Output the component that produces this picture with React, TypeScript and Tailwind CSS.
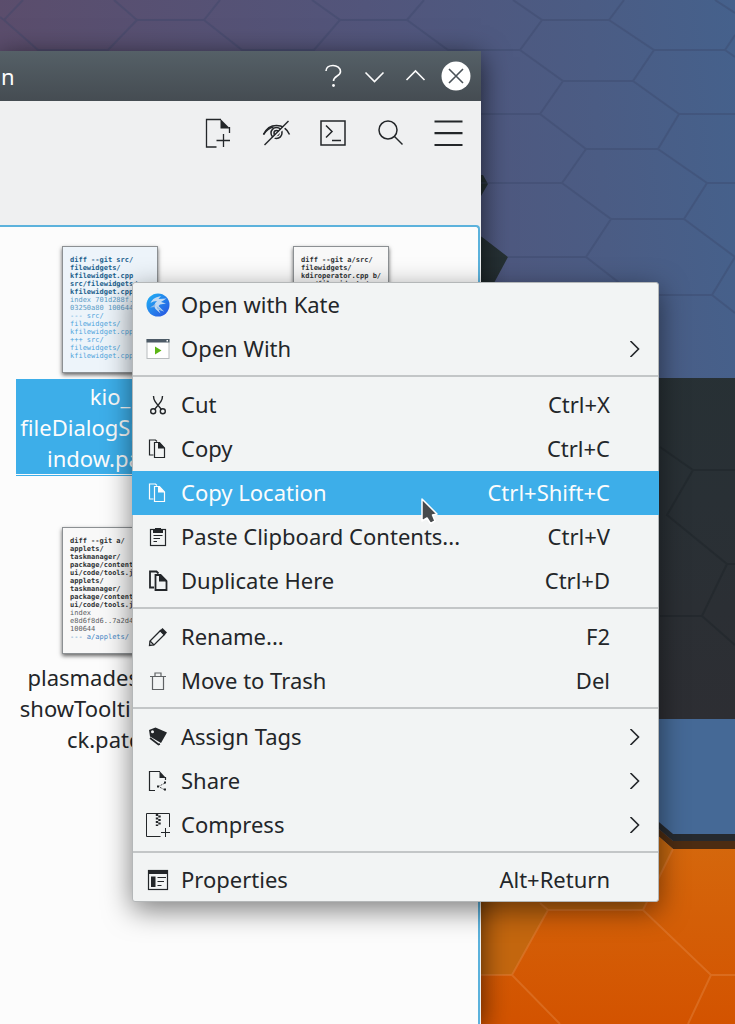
import type { ReactNode } from 'react';

type MenuEntry = {
  label: string;
  icon: ReactNode;
  shortcut?: string;
  submenu?: boolean;
  active?: boolean;
};

type FileEntry = {
  name: string[];
  bold: string[];
  plain: string[];
  diff: string[];
  selected?: boolean;
};

function Icon({ children, size = 24, width = 1.2 }: { children: ReactNode; size?: number; width?: number }) {
  return (
    <svg
      width={size}
      height={size}
      viewBox={`0 0 ${size} ${size}`}
      fill="none"
      stroke="currentColor"
      strokeWidth={width}
      className="shrink-0"
      aria-hidden="true"
    >
      {children}
    </svg>
  );
}

const KateIcon = () => (
  <Icon>
    <defs>
      <linearGradient id="kate" x1="0" y1="0" x2="1" y2="1">
        <stop offset="0" stopColor="#1fb4f6" />
        <stop offset="1" stopColor="#2a50e0" />
      </linearGradient>
    </defs>
    <circle cx="12" cy="12" r="11.5" fill="url(#kate)" stroke="none" />
    <path
      d="M4.500 10C6.500 5.500 10 4 15 3L12.500 6L20.500 5.500L15 9L20 10.500L14 11.500L12.500 13L18 18.500L12.500 16.500L14.500 20.500L9.500 16C7.500 13.500 8 10.500 11 8C8.500 8 6.500 8.800 4.500 10Z"
      fill="#c3daf3"
      stroke="none"
    />
    <path d="M9.500 11L4 14.500L9 14ZM10.500 13L18 18.500L11.500 16Z" fill="#8fb9e6" stroke="none" />
  </Icon>
);

const OpenWithIcon = () => (
  <Icon>
    <rect x="1" y="2.5" width="22" height="19" fill="#fff" stroke="#b8bcbe" strokeWidth="1" />
    <rect x="0.5" y="2" width="23" height="3.500" fill="#4d5a66" stroke="none" />
    <rect x="20.500" y="3" width="1.500" height="1.500" fill="#fff" stroke="none" />
    <path d="M9 9.500L15.500 13.500L9 17.500Z" fill="#5cb615" stroke="none" />
  </Icon>
);

const CutIcon = () => (
  <Icon width={1.4}>
    <circle cx="7.200" cy="18.200" r="2.500" />
    <circle cx="16.800" cy="18.200" r="2.500" />
    <path d="M7.500 3C7.500 7 9 9 15.300 16.200M16.500 3C16.500 7 15 9 8.700 16.200" />
  </Icon>
);

const CopyIcon = () => (
  <Icon>
    <path d="M7.500 18H3.500V3H9.500L11 4.500" />
    <path d="M8.500 5.500H13.500L18.500 11V20.500H8.500Z" />
    <path d="M12 5.500H13.500L19 11.500H12Z" fill="currentColor" stroke="none" />
  </Icon>
);

const DuplicateIcon = () => (
  <Icon width={1.8}>
    <path d="M8 18.500H4V2.500H10.500L12.500 4.500" />
    <path d="M9.500 6H14.500L20.500 12V21H9.500Z" />
    <path d="M13 5.500H15L21 11.500V12.500H13Z" fill="currentColor" stroke="none" />
  </Icon>
);

const PasteIcon = () => (
  <Icon>
    <rect x="4.500" y="4.500" width="15" height="16" />
    <path d="M7 4.500H9V3H15V4.500H17V8H7Z" fill="currentColor" stroke="none" />
    <path d="M7.500 10.500H16.500M7.500 13.500H14M7.500 16.500H11" />
  </Icon>
);

const RenameIcon = () => (
  <Icon width={1.3}>
    <path d="M3.500 20.500L4 16L14.500 5.500L18.500 9.500L8 20Z" />
    <path d="M4 16L8 20" />
    <path d="M13.500 6L16.500 3L21 7.500L18 10.500Z" fill="currentColor" stroke="none" />
  </Icon>
);

const TrashIcon = () => (
  <Icon>
    <path d="M4 7.500H20M6.500 7.500V20.500H17.500V7.500M9 7V4H15V7" stroke="#5f6264" />
  </Icon>
);

const TagIcon = () => (
  <Icon>
    <path
      fillRule="evenodd"
      d="M3 5L9.500 2.500L21 7.500L15 18L4 11.500ZM6.500 5.200A1.500 1.500 0 1 0 6.500 8.200A1.500 1.500 0 1 0 6.500 5.200Z"
      fill="currentColor"
      stroke="none"
    />
    <path d="M4 13L12.500 19.500L14 19" strokeWidth="1.600" />
  </Icon>
);

const ShareIcon = () => (
  <Icon>
    <path d="M9 21.500H3.500V2.500H14M19.500 8V11" />
    <path d="M13.500 2L20 9H13.500Z" fill="currentColor" stroke="none" />
    <path d="M19 14L12.500 17.500L19 21" strokeWidth="0.800" strokeDasharray="2 1" />
    <path d="M18 12.500H20V14.500H18ZM11 16.500H13V18.500H11ZM18 19.500H20V21.500H18Z" fill="currentColor" stroke="none" />
  </Icon>
);

const CompressIcon = () => (
  <Icon width={1}>
    <path d="M14.500 23.500H0.500V0.500H23.500V14" />
    <path d="M11 1V13M13.500 2.500V13" strokeWidth="2.400" strokeDasharray="2 1.500" />
    <path d="M15 19.500H24M19.500 15V24" />
  </Icon>
);

const PropertiesIcon = () => (
  <Icon>
    <rect x="2.500" y="2.500" width="19" height="19" />
    <path d="M2 2H22V6H2ZM5 8.500H9.500V19H5Z" fill="currentColor" stroke="none" />
    <path d="M11.500 9.500H20M11.500 13.500H18M11.500 17.500H15.500" strokeWidth="1" />
  </Icon>
);

const menuGroups: MenuEntry[][] = [
  [
    { label: 'Open with Kate', icon: <KateIcon /> },
    { label: 'Open With', icon: <OpenWithIcon />, submenu: true },
  ],
  [
    { label: 'Cut', icon: <CutIcon />, shortcut: 'Ctrl+X' },
    { label: 'Copy', icon: <CopyIcon />, shortcut: 'Ctrl+C' },
    { label: 'Copy Location', icon: <CopyIcon />, shortcut: 'Ctrl+Shift+C', active: true },
    { label: 'Paste Clipboard Contents...', icon: <PasteIcon />, shortcut: 'Ctrl+V' },
    { label: 'Duplicate Here', icon: <DuplicateIcon />, shortcut: 'Ctrl+D' },
  ],
  [
    { label: 'Rename...', icon: <RenameIcon />, shortcut: 'F2' },
    { label: 'Move to Trash', icon: <TrashIcon />, shortcut: 'Del' },
  ],
  [
    { label: 'Assign Tags', icon: <TagIcon />, submenu: true },
    { label: 'Share', icon: <ShareIcon />, submenu: true },
    { label: 'Compress', icon: <CompressIcon />, submenu: true },
  ],
  [{ label: 'Properties', icon: <PropertiesIcon />, shortcut: 'Alt+Return' }],
];

const files: FileEntry[] = [
  {
    name: ['kio_', 'fileDialogSpaceW', 'indow.patch'],
    bold: ['diff --git src/', 'filewidgets/', 'kfilewidget.cpp', 'src/filewidgets/', 'kfilewidget.cpp'],
    plain: ['index 701d288f.', '03250a80 100644'],
    diff: ['--- src/', 'filewidgets/', 'kfilewidget.cpp', '+++ src/', 'filewidgets/', 'kfilewidget.cpp'],
    selected: true,
  },
  {
    name: [],
    bold: ['diff --git a/src/', 'filewidgets/', 'kdiroperator.cpp b/', 'src/filewidgets/'],
    plain: [],
    diff: [],
  },
  {
    name: ['plasmadesktop-', 'showTooltipOnCli', 'ck.patch'],
    bold: [
      'diff --git a/',
      'applets/',
      'taskmanager/',
      'package/contents/',
      'ui/code/tools.js b/',
      'applets/',
      'taskmanager/',
      'package/contents/',
      'ui/code/tools.js',
    ],
    plain: ['index', 'e8d6f8d6..7a2d4e', '100644'],
    diff: ['--- a/applets/'],
  },
];

function Wallpaper() {
  return (
    <svg
      className="absolute inset-0 h-full w-full"
      viewBox="0 0 735 1024"
      preserveAspectRatio="xMaxYMin slice"
      aria-hidden="true"
    >
      <defs>
        <linearGradient id="sky" gradientUnits="userSpaceOnUse" x1="0" y1="60" x2="735" y2="0">
          <stop offset="0" stopColor="#5b4d6c" />
          <stop offset="0.5" stopColor="#52557b" />
          <stop offset="0.8" stopColor="#4b5c84" />
          <stop offset="1" stopColor="#45618c" />
        </linearGradient>
        <linearGradient id="night" x1="0" y1="0" x2="0" y2="1">
          <stop offset="0" stopColor="#253134" />
          <stop offset="0.6" stopColor="#293035" />
          <stop offset="1" stopColor="#2d2e33" />
        </linearGradient>
        <linearGradient id="ember" x1="0" y1="0" x2="0" y2="1">
          <stop offset="0" stopColor="#d56a0e" />
          <stop offset="1" stopColor="#d35300" />
        </linearGradient>
      </defs>
      <rect width="735" height="380" fill="url(#sky)" />
      <path d="M470 175H483L488 184L470 215ZM470 230L482 237L508 257L494 283V378H735V719H470Z" fill="url(#night)" />
      <path d="M500 283H735V378H664L650 368V330H500Z" fill="url(#sky)" />
      <path d="M640 719H735V834H673L640 806Z" fill="#456996" />
      <path d="M470 806H640L673 834H735V841H673L640 813H470Z" fill="#262a2f" />
      <path d="M640 813L673 841H735V849H673L640 820Z" fill="#4c2c12" />
      <path d="M470 820H640L673 849H735V1024H470Z" fill="url(#ember)" />
      <path d="M470 820H640L673 849L643 910H548L512 975H470Z" fill="#c4670f" />
      <path
        d="M0 17L4 20L23 0M4 20L38 50H108L137 20L114 0M137 20H204L220 0M204 20L242 50H314L340 20L312 0M340 20H407L424 0M407 20L448 50H520L542 20L513 0M542 20H609L624 0M609 20L654 50H725L735 35M725 50L735 57M715 0L735 13M520 50L563 81H633L654 50M563 81L540 114H480M540 114L586 149H658L679 114L633 81M679 114H735M586 149L562 183H480M562 183L611 219H684L707 183L658 149M707 183H735M611 219L586 257H508M586 257L635 295H712L735 257L684 219M712 295L735 313"
        fill="none"
        stroke="#3a4466"
        strokeOpacity="0.35"
        strokeWidth="2"
      />
      <path
        d="M660 447L693 470H735M693 470L667 515L727 564H735M727 564L702 616H660M702 616L735 645"
        fill="none"
        stroke="#1d2428"
        strokeOpacity="0.45"
        strokeWidth="2"
      />
      <path
        d="M673 849L643 910H548L540 903M548 910L512 975H480M512 975L560 1024M643 910L711 975H735M711 975L688 1024"
        fill="none"
        stroke="#e2803a"
        strokeOpacity="0.5"
        strokeWidth="2"
      />
    </svg>
  );
}

function TitleBar() {
  return (
    <header className="flex h-[50px] items-center justify-between bg-linear-to-b from-[#556067] to-[#454c52] pr-[9px] text-[#fcfcfc]">
      <h1 className="pl-px text-[22px] leading-none">n</h1>
      <div className="flex gap-[9px]">
        <button type="button" aria-label="Help">
          <Icon size={32} width={1.6}>
            <path d="M9 11C9 7.500 12 5.500 16 5.500S23.500 8 23.500 11.500C23.500 16.500 16.500 15.500 16.500 21" />
            <circle cx="16.500" cy="25.500" r="1.400" fill="currentColor" stroke="none" />
          </Icon>
        </button>
        <button type="button" aria-label="Minimize">
          <Icon size={32} width={1.6}>
            <path d="M7.500 12.500L16.500 21.500L25.500 12.500" />
          </Icon>
        </button>
        <button type="button" aria-label="Maximize">
          <Icon size={32} width={1.6}>
            <path d="M7.500 20L16.500 11L25.500 20" />
          </Icon>
        </button>
        <button type="button" aria-label="Close">
          <Icon size={32} width={1.6}>
            <circle cx="16" cy="16" r="14.500" fill="#fff" stroke="none" />
            <path d="M9 9L23 23M23 9L9 23" stroke="#4a5259" />
          </Icon>
        </button>
      </div>
    </header>
  );
}

function Toolbar() {
  return (
    <div className="flex h-[124px] justify-end bg-[#eff0f1] pt-4 pr-[17px] text-[#232629]">
      <div className="flex h-8 w-[262px] justify-between">
        <button type="button" aria-label="New file">
          <Icon size={32} width={1.3}>
            <path d="M14.500 30H4.500V2.500H19M27.500 10V16" />
            <path d="M18.500 2L28 11.500H18.500Z" fill="currentColor" stroke="none" />
            <path d="M14.500 23.500H28M21.500 17V30" />
          </Icon>
        </button>
        <button type="button" aria-label="Show hidden files">
          <Icon size={32} width={1.5}>
            <path d="M3.500 17.500C6.500 11 11 8.500 16.500 8.500S26.500 11 29.500 17.500" />
            <path d="M3.500 17.500C6.500 13 10 10.500 13.500 10" />
            <circle cx="16.500" cy="16" r="5.500" />
            <circle cx="16.500" cy="16" r="2.500" />
            <path d="M5.500 29L29.500 5" stroke="#eff0f1" strokeWidth="2" />
            <path d="M4.500 28L28.500 4" />
          </Icon>
        </button>
        <button type="button" aria-label="Terminal">
          <Icon size={32} width={1.5}>
            <rect x="4" y="4" width="24" height="24" />
            <path d="M9 8.500L15 14.500L9 20.500M15 23.500H24" />
          </Icon>
        </button>
        <button type="button" aria-label="Search">
          <Icon size={32} width={1.5}>
            <circle cx="13" cy="13" r="9" />
            <path d="M19.500 19.500L27.500 27.500" />
          </Icon>
        </button>
        <button type="button" aria-label="Menu">
          <Icon size={32} width={2.2}>
            <path d="M2.500 4.500H30.500M2.500 16.200H30.500M2.500 28H30.500" />
          </Icon>
        </button>
      </div>
    </div>
  );
}

function FileItem({ file }: { file: FileEntry }) {
  const ink = file.selected ? 'text-[#1b5f8c]' : 'text-[#2e3234]';
  const faded = file.selected ? 'text-[#5b9cc6]' : 'text-[#5c6062]';
  const mark = file.selected ? 'text-[#4fa4dc]' : 'text-[#3f83c4]';
  return (
    <div className="flex flex-col items-center">
      <div
        className={`h-[127px] w-24 overflow-hidden border border-[#8c9093] pt-[9px] pl-[7px] font-['DejaVu_Sans_Mono',monospace] text-[7px] leading-2 whitespace-pre shadow-[0_2px_4px_rgba(0,0,0,0.6)] ${
          file.selected ? 'bg-[#edf4fa]' : 'bg-[#f8f8f8]'
        }`}
      >
        <div className={`font-bold ${ink}`}>
          {file.bold.map((line, i) => (
            <p key={i}>{line}</p>
          ))}
        </div>
        <div className={faded}>
          {file.plain.map((line, i) => (
            <p key={i}>{line}</p>
          ))}
        </div>
        <div className={mark}>
          {file.diff.map((line, i) => (
            <p key={i}>{line}</p>
          ))}
        </div>
      </div>
      {file.name.length > 0 && (
        <div
          className={`mt-[6px] w-full text-center text-[22px] leading-[31px] ${
            file.selected ? 'border-b border-[#3daee9] pb-px' : 'text-[#232629]'
          }`}
        >
          <div className={file.selected ? 'bg-[#3daee9] pt-[2px] text-[#fcfcfc]' : 'pt-[2px]'}>
            {file.name.map((line) => (
              <p key={line} className="whitespace-nowrap">
                {line}
              </p>
            ))}
          </div>
        </div>
      )}
    </div>
  );
}

function ContextMenu() {
  return (
    <div
      role="menu"
      className="absolute top-[282px] left-[132px] w-[527px] rounded-[3px] border border-[#b4b7b8] bg-[#f2f4f4] text-[22px] leading-[30px] text-[#232629] shadow-[0_8px_28px_rgba(0,0,0,0.5)]"
    >
      {menuGroups.map((group, g) => (
        <div key={g} role="group">
          {g > 0 && <hr className="mt-1 mb-[6px] border-t-2 border-[#c3c6c7]" />}
          {group.map((item) => (
            <button
              key={item.label}
              type="button"
              role="menuitem"
              className={`flex items-center gap-[11px] text-left ${g === menuGroups.length - 1 ? 'h-[42px]' : 'h-11'} ${
                item.active ? '-mx-px w-[calc(100%+2px)] bg-[#3daee9] pr-[49px] pl-[14px] text-[#fcfcfc]' : 'w-full pl-[13px]'
              } ${item.submenu ? 'pr-[15px]' : item.active ? '' : 'pr-12'}`}
            >
              {item.icon}
              <span className="flex-1 pb-[2px]">{item.label}</span>
              {item.shortcut && <span className="pb-[2px]">{item.shortcut}</span>}
              {item.submenu && (
                <Icon size={16} width={1.6}>
                  <path d="M3.500 0L11.500 8L3.500 16" />
                </Icon>
              )}
            </button>
          ))}
        </div>
      ))}
      {/* Pointer */}
      <svg className="absolute top-[213px] left-[286px]" width="22" height="32" viewBox="0 0 22 32" aria-hidden="true">
        <path
          d="M3 3L18 18L13.500 19L16 25L11.500 27.500L8 22L3 25Z"
          fill="#474a4c"
          stroke="#fff"
          strokeWidth="1.500"
          strokeLinejoin="round"
        />
      </svg>
    </div>
  );
}

export default function App() {
  return (
    <main className="relative flex min-h-screen flex-col overflow-hidden bg-[#4b5c84] pt-[51px] pr-[254px] font-['Noto_Sans',sans-serif]">
      <Wallpaper />

      {/* File manager */}
      <section className="relative flex flex-1 flex-col bg-[#eff0f1] shadow-[0_6px_26px_rgba(0,0,0,0.65)]">
        <TitleBar />
        <Toolbar />
        <div className="mr-px flex-1 rounded-tr border-t-2 border-r-2 border-[#5cb2dc] bg-[#fcfcfc] pt-[19px] pl-4">
          <div className="grid grid-cols-[188px_188px] gap-x-[43px] gap-y-[51px]">
            {files.map((file, i) => (
              <FileItem key={i} file={file} />
            ))}
          </div>
        </div>
      </section>

      <ContextMenu />
    </main>
  );
}
